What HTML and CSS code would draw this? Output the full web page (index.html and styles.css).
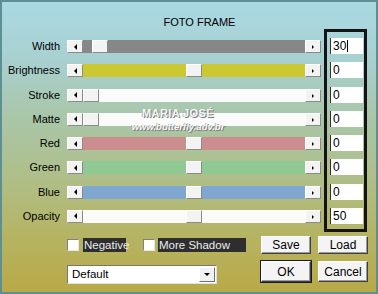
FILE: index.html
```html
<!DOCTYPE html>
<html lang="en">
<head>
    <meta charset="UTF-8">
    <title>Foto Frame</title>
    <link rel="stylesheet" href="styles.css">
</head>
<body>
    <div class="dialog">
        <div class="title">FOTO FRAME</div>

        <div class="main">
            <div class="sliders">
                <div class="row">
                    <span class="label">Width</span>
                    <div class="scroll">
                        <span class="btn"><i class="arrow-left"></i></span>
                        <div class="track gray"><span class="thumb" style="margin-left: 9px"></span></div>
                        <span class="btn"><i class="arrow-right"></i></span>
                    </div>
                </div>
                <div class="row">
                    <span class="label">Brightness</span>
                    <div class="scroll">
                        <span class="btn"><i class="arrow-left"></i></span>
                        <div class="track yellow"><span class="thumb" style="margin-left: 103px"></span></div>
                        <span class="btn"><i class="arrow-right"></i></span>
                    </div>
                </div>
                <div class="row">
                    <span class="label">Stroke</span>
                    <div class="scroll">
                        <span class="btn"><i class="arrow-left"></i></span>
                        <div class="track white"><span class="thumb" style="margin-left: 0px"></span></div>
                        <span class="btn"><i class="arrow-right"></i></span>
                    </div>
                </div>
                <div class="row">
                    <span class="label">Matte</span>
                    <div class="scroll">
                        <span class="btn"><i class="arrow-left"></i></span>
                        <div class="track white"><span class="thumb" style="margin-left: 0px"></span></div>
                        <span class="btn"><i class="arrow-right"></i></span>
                    </div>
                </div>
                <div class="row">
                    <span class="label">Red</span>
                    <div class="scroll">
                        <span class="btn"><i class="arrow-left"></i></span>
                        <div class="track red"><span class="thumb" style="margin-left: 103px"></span></div>
                        <span class="btn"><i class="arrow-right"></i></span>
                    </div>
                </div>
                <div class="row">
                    <span class="label">Green</span>
                    <div class="scroll">
                        <span class="btn"><i class="arrow-left"></i></span>
                        <div class="track green"><span class="thumb" style="margin-left: 103px"></span></div>
                        <span class="btn"><i class="arrow-right"></i></span>
                    </div>
                </div>
                <div class="row">
                    <span class="label">Blue</span>
                    <div class="scroll">
                        <span class="btn"><i class="arrow-left"></i></span>
                        <div class="track blue"><span class="thumb" style="margin-left: 103px"></span></div>
                        <span class="btn"><i class="arrow-right"></i></span>
                    </div>
                </div>
                <div class="row">
                    <span class="label">Opacity</span>
                    <div class="scroll">
                        <span class="btn"><i class="arrow-left"></i></span>
                        <div class="track white"><span class="thumb" style="margin-left: 103px"></span></div>
                        <span class="btn"><i class="arrow-right"></i></span>
                    </div>
                </div>
            </div>

            <div class="values">
                <div class="field">30<span class="caret"></span></div>
                <div class="field">0</div>
                <div class="field">0</div>
                <div class="field">0</div>
                <div class="field">0</div>
                <div class="field">0</div>
                <div class="field">0</div>
                <div class="field">50</div>
            </div>
        </div>

        <div class="bottom">
            <div class="options">
                <div class="checks">
                    <span class="box"></span>
                    <span class="check-text neg">Negative</span>
                    <span class="box second"></span>
                    <span class="check-text shadow">More Shadow</span>
                </div>
                <div class="select">
                    <span class="select-text">Default</span>
                    <span class="drop"><i class="arrow-down"></i></span>
                </div>
            </div>
            <div class="buttons">
                <button class="push small">Save</button>
                <button class="push small">Load</button>
                <button class="push large default">OK</button>
                <button class="push large">Cancel</button>
            </div>
        </div>

        <!-- watermark laid over the sliders -->
        <div class="watermark">
            <div class="wm-name">MARIA JOSÉ</div>
            <div class="wm-site">www.butterfly.adv.br</div>
        </div>
    </div>
</body>
</html>
```

FILE: styles.css
```css
/* Global */
body {
    margin: 0;
    padding: 0;
    font-family: 'Liberation Sans', Arial, sans-serif;
    font-size: 11px;
    color: #000;
}

.dialog {
    position: relative;
    width: 378px;
    height: 294px;
    box-sizing: border-box;
    border: 2px solid #5e8f93;
    background: linear-gradient(to bottom, #aad9e3 0%, #a8d0d0 20%, #a9c6a8 40%, #afbf8a 60%, #b5b464 80%, #b9a947 100%);
    overflow: hidden;
}

.title {
    padding: 13px 0 0 21px;
    height: 14px;
    line-height: 14px;
    text-align: center;
    font-size: 11px;
}

/* Sliders */
.main {
    display: flex;
}

.sliders {
    padding-top: 11px;
}

.row {
    display: flex;
    height: 24.28px;
}

.label {
    width: 58px;
    margin-right: 7px;
    text-align: right;
    line-height: 13px;
    height: 13px;
}

.scroll {
    display: flex;
    width: 254px;
    height: 13px;
}

.btn,
.thumb {
    box-sizing: border-box;
    width: 16px;
    height: 13px;
    background: #f3f3f3;
    border: 1px solid;
    border-color: #fff #8a8a8a #8a8a8a #fff;
    display: flex;
    align-items: center;
    justify-content: center;
    flex-shrink: 0;
}

.arrow-left {
    width: 0;
    height: 0;
    border-top: 3px solid transparent;
    border-bottom: 3px solid transparent;
    border-right: 3px solid #000;
}

.arrow-right {
    width: 0;
    height: 0;
    border-top: 2px solid transparent;
    border-bottom: 2px solid transparent;
    border-left: 2px solid #000;
    margin-top: 1px;
}

.track {
    flex: 1;
    display: flex;
}

.gray { background: #878787; }
.yellow { background: #cbc831; }
.white { background: #fbfbfb; }
.red { background: #cc8d8e; }
.green { background: #8fca95; }
.blue { background: #7fa7cf; }

/* Value boxes */
.values {
    box-sizing: border-box;
    width: 43px;
    height: 203px;
    margin-left: 3px;
    border: 3px solid #141414;
    padding: 6px 0 0 3px;
}

.field {
    box-sizing: border-box;
    width: 33px;
    height: 16px;
    margin-bottom: 8.28px;
    background: #fff;
    border-left: 1px solid #333;
    padding-left: 2px;
    font-size: 12px;
    line-height: 16px;
    display: flex;
    align-items: center;
}

.caret {
    width: 1px;
    height: 12px;
    background: #000;
    margin-left: 1px;
}

/* Bottom area */
.bottom {
    display: flex;
    padding: 2px 0 0 65px;
}

.options {
    width: 192px;
    padding-top: 2px;
}

.checks {
    display: flex;
    align-items: center;
    height: 14px;
}

.box {
    box-sizing: border-box;
    width: 12px;
    height: 12px;
    background: #fff;
    border: 1px solid;
    border-color: #808080 #e8e8e8 #e8e8e8 #808080;
    margin-right: 4px;
}

.box.second {
    margin-left: 17px;
    margin-right: 3px;
}

.check-text {
    background: #2e2e2e;
    color: #ececec;
    height: 14px;
    line-height: 14px;
    font-size: 11.5px;
    padding-left: 1px;
    box-sizing: border-box;
}

.neg { width: 43px; }
.shadow { width: 88px; }

.select {
    box-sizing: border-box;
    display: flex;
    width: 150px;
    height: 19px;
    margin-top: 13px;
    background: #fff;
    border: 1px solid;
    border-color: #777 #e0e0e0 #e0e0e0 #777;
    padding: 1px;
}

.select-text {
    flex: 1;
    padding-left: 3px;
    line-height: 15px;
    font-size: 11.5px;
}

.drop {
    box-sizing: border-box;
    width: 16px;
    background: #f1f1f1;
    border: 1px solid;
    border-color: #fff #707070 #707070 #fff;
    display: flex;
    align-items: center;
    justify-content: center;
}

.arrow-down {
    width: 0;
    height: 0;
    border-left: 3px solid transparent;
    border-right: 3px solid transparent;
    border-top: 3px solid #000;
}

/* Push buttons */
.buttons {
    display: grid;
    grid-template-columns: 50px 50px;
    grid-template-rows: 18px 21px;
    column-gap: 7px;
    row-gap: 7px;
    margin-left: 2px;
}

.push {
    box-sizing: border-box;
    margin: 0;
    padding: 0;
    background: #f4f4f4;
    border: 1px solid;
    border-color: #fff #404040 #404040 #fff;
    box-shadow: inset -1px -1px 0 #9a9a9a;
    font-family: 'Liberation Sans', Arial, sans-serif;
    font-size: 12px;
    color: #000;
}

.push.default {
    outline: 1px solid #1a1a1a;
    outline-offset: 0;
}

/* Watermark */
.watermark {
    position: absolute;
    left: 120px;
    top: 105px;
    width: 112px;
    text-align: center;
    color: #f6f6f6;
    text-shadow: 1px 1px 0 #7c7c7c, -1px 0 0 #b0b0b0;
    font-weight: bold;
}

.wm-name {
    font-size: 11px;
    line-height: 13px;
    letter-spacing: 0.4px;
}

.wm-site {
    font-size: 9.5px;
    line-height: 11px;
    font-style: italic;
    margin-top: 1px;
}
```
